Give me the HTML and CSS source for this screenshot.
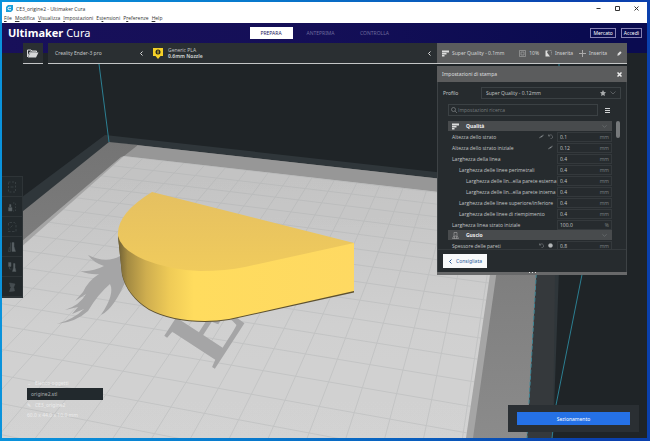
FILE: index.html
```html
<!DOCTYPE html>
<html lang="it">
<head>
    <meta charset="UTF-8">
    <meta name="viewport" content="width=device-width, initial-scale=1.0">
    <title>CE3_origine2 - Ultimaker Cura</title>
    <link rel="stylesheet" href="styles.css">
</head>
<body>
    <div class="window">
        <div class="titlebar">
            <svg class="app-icon" viewBox="0 0 14 14"><path d="M4 0h10v10l-4 4H0V4z" fill="#1a9fd9"/><path d="M10 4.500H6.500a2.500 2.500 0 0 0 0 5H10" fill="none" stroke="#fff" stroke-width="2"/></svg>
            <span class="title">CE3_origine2 - Ultimaker Cura</span>
            <div class="window-buttons">
                <button aria-label="Riduci"><svg viewBox="0 0 10 10"><path d="M1 5h8"/></svg></button>
                <button aria-label="Ingrandisci"><svg viewBox="0 0 10 10"><path d="M1 1h8v8H1z"/></svg></button>
                <button aria-label="Chiudi"><svg viewBox="0 0 10 10"><path d="M1 1l8 8M9 1L1 9"/></svg></button>
            </div>
        </div>
        <nav class="menubar">
            <a href="#"><u>F</u>ile</a>
            <a href="#"><u>M</u>odifica</a>
            <a href="#"><u>V</u>isualizza</a>
            <a href="#"><u>I</u>mpostazioni</a>
            <a href="#">Es<u>t</u>ensioni</a>
            <a href="#">P<u>r</u>eferenze</a>
            <a href="#"><u>H</u>elp</a>
        </nav>

        <main class="main">
            <svg class="scene" viewBox="2 23 645 415" preserveAspectRatio="xMinYMin slice" aria-hidden="true">
                <defs>
                    <linearGradient id="bed" x1="0" y1="0" x2="0" y2="1">
                        <stop offset="0" stop-color="#c2c2c2"/>
                        <stop offset="0.600" stop-color="#d0d0d0"/>
                        <stop offset="1" stop-color="#d3d3d3"/>
                    </linearGradient>
                    <linearGradient id="frame" x1="0" y1="0" x2="0" y2="1">
                        <stop offset="0" stop-color="#747474"/>
                        <stop offset="1" stop-color="#8b8b8b"/>
                    </linearGradient>
                    <linearGradient id="top" x1="0" y1="0" x2="0" y2="1">
                        <stop offset="0" stop-color="#e5c061"/>
                        <stop offset="1" stop-color="#f0cb5c"/>
                    </linearGradient>
                    <linearGradient id="side" gradientUnits="userSpaceOnUse" x1="118" y1="0" x2="354" y2="0">
                        <stop offset="0" stop-color="#6f6035"/>
                        <stop offset="0.040" stop-color="#a38a42"/>
                        <stop offset="0.120" stop-color="#cfae4f"/>
                        <stop offset="0.220" stop-color="#efcb57"/>
                        <stop offset="0.320" stop-color="#ffdc5e"/>
                        <stop offset="1" stop-color="#fed962"/>
                    </linearGradient>
                    <clipPath id="bed-clip"><path d="M124 156L501 199L466 438H2V264z"/></clipPath>
                </defs>
                <path d="M2 23h645v415H2z" fill="#1f2427"/>
                <!-- bordo esterno del piatto -->
                <path d="M2 212L105 135L562 186L553 438H2z" fill="#2f363a"/>
                <path d="M555 275L562 186L530 186L527 438H553z" fill="#35393c"/>
                <path d="M2 228L109 142L541 190L527 438H2z" fill="url(#frame)"/>
                <path d="M109 142L541 190L501 199L124 156L138 145z" fill="#979797"/>
                <path d="M121 157L124 156L501 199L507 199L473 438H2V258z" fill="#a5a5a5"/>
                <path d="M124 156L501 199L466 438H2V264z" fill="url(#bed)"/>
                <g id="grid" clip-path="url(#bed-clip)" stroke="#a9acad" stroke-width="1" opacity="0.350"></g>
                <!-- drago -->
                <path d="M120 256Q106 264 88 255Q94 263 104 266Q93 272 80 271Q91 275 99 274Q88 281 83 292L75 301L86 294Q80 305 65 310L78 307L72 314L84 309Q74 319 57 324Q76 322 88 311Q98 294 110 284Q115 294 101 315Q114 309 127 278z" fill="#a5a5a6"/>
                <text class="bed-text" transform="translate(214 370) rotate(-57)">E</text>
                <!-- volume di stampa -->
                <path d="M99 64L109 142M559 64V80M620 84L556 405L552 438" fill="none" stroke="#2c7f92"/>
                <path d="M541 190L527 438" stroke="#3c8797" stroke-dasharray="4 2"/>
                <!-- modello -->
                <path d="M118 236L122 275Q127 296 149 310Q172 322 205 322Q217 322 229 320L354 292.500V243z" fill="#5d5130"/>
                <path d="M118 236L122 274Q127 295 149 309Q172 321 205 321Q217 321 229 319L354 291V243z" fill="url(#side)"/>
                <path d="M152 192L354 243L245 267Q226 271 200 271Q170 270 145 260Q121 250 118 236Q116 214 152 192z" fill="url(#top)"/>
            </svg>

            <header class="header">
                <div class="logo"><b>Ultimaker</b> Cura</div>
                <nav class="stages">
                    <button class="stage active">PREPARA</button>
                    <button class="stage">ANTEPRIMA</button>
                    <button class="stage">CONTROLLA</button>
                </nav>
                <div class="account">
                    <button>Mercato</button>
                    <button>Accedi</button>
                </div>
            </header>

            <div class="stage-bar">
                <button class="open-file" aria-label="Apri file">
                    <svg viewBox="0 0 24 18"><path d="M1 16V2h7l2 2h9v2H6z" fill="none" stroke="#d6d8d9" stroke-width="2"/><path d="M7 7h16l-5 10H2z" fill="#d6d8d9"/></svg>
                </button>
                <div class="config">
                    <button class="printer">Creality Ender-3 pro
                        <svg class="chevron" viewBox="0 0 10 10"><path d="M7 1L3 5l4 4"/></svg>
                    </button>
                    <button class="material">
                        <svg class="extruder" viewBox="0 0 20 22"><path d="M0 0h20v16h-5l-5 6-5-6H0z" fill="#f5d027"/><circle cx="10" cy="8" r="5" fill="#2b2a20"/><path d="M10 5v6" stroke="#f5d027" stroke-width="2"/></svg>
                        <span>Generic PLA<br><b>0.6mm Nozzle</b></span>
                        <svg class="chevron" viewBox="0 0 10 10"><path d="M7 1L3 5l4 4"/></svg>
                    </button>
                </div>
                <button class="summary">
                    <span class="item quality"><svg viewBox="0 0 14 14"><path d="M0 1h14v4H0zM0 6h9v3H0zM0 10h5v3H0z" fill="#ddd"/></svg>Super Quality - 0.1mm</span>
                    <span class="item"><svg viewBox="0 0 14 14"><path d="M1 1h12v12H1zM4 4h6v6H4z" fill="none" stroke="#bbb"/></svg>10%</span>
                    <span class="item"><svg viewBox="0 0 14 14"><path d="M1 1h5L4 5l6 8H1z" fill="#ddd"/><path d="M7 1h6v8" fill="none" stroke="#bbb" stroke-dasharray="2 1"/></svg>Inserita</span>
                    <span class="item"><svg viewBox="0 0 14 14"><path d="M7 0v14M0 7h14" fill="none" stroke="#aaa" stroke-width="2"/></svg>Inserita</span>
                    <svg class="pencil" viewBox="0 0 14 14"><path d="M1 13l1-5 7-7 4 4-7 7z" fill="#ddd"/></svg>
                </button>
            </div>

            <div class="content">
                <div class="toolbar">
                    <button aria-label="Sposta"><svg viewBox="0 0 20 24"><path d="M3 2h14v20H3z" stroke-dasharray="4 3"/><path d="M7 12h6"/></svg></button>
                    <button aria-label="Scala"><svg viewBox="0 0 20 24"><path d="M3 13h7v7H3zM5 7h3v5H5z" fill="#596064"/><path d="M12 4h5v16h-5" stroke-dasharray="3 3"/></svg></button>
                    <button aria-label="Ruota"><svg viewBox="0 0 20 24"><path d="M3 9V3h12l3 4v14H3v-6" stroke-dasharray="5 3"/><path d="M7 13l4-4"/></svg></button>
                    <button aria-label="Specchia"><svg viewBox="0 0 20 24"><path d="M10 3h4v8l3 10h-7z" fill="#596064"/><path d="M7 3v18H3l2-9"/></svg></button>
                    <button aria-label="Impostazioni per modello"><svg viewBox="0 0 20 24"><path d="M3 3h5v8H3zM13 5h3v8l2 8h-7l2-8z" fill="#596064"/><path d="M5 12v4h4"/></svg></button>
                    <button aria-label="Blocco supporto"><svg viewBox="0 0 20 24"><path d="M5 4l11 2-3 6 2 8-10 1 3-8z" fill="#444b4f"/><path d="M5 10h10M6 16h9"/></svg></button>
                </div>

                <section class="panel">
                    <div class="panel-title">
                        <h2>Impostazioni di stampa</h2>
                        <button aria-label="Chiudi pannello"><svg viewBox="0 0 10 10"><path d="M1 1l8 8M9 1L1 9" stroke="#eee" stroke-width="3"/></svg></button>
                    </div>
                    <div class="profile">
                        <label for="profilo">Profilo</label>
                        <div class="select">
                            <select id="profilo"><option>Super Quality - 0.12mm</option></select>
                            <svg class="star" viewBox="0 0 12 12"><path d="M6 0l2 4 4 .5-3 3 .8 4.500L6 10l-3.800 2L3 7.500l-3-3L4 4z" fill="#a9acad"/></svg>
                            <svg class="down" viewBox="0 0 12 12"><path d="M1 3l5 5 5-5"/></svg>
                        </div>
                    </div>
                    <div class="search">
                        <div class="search-box">
                            <svg viewBox="0 0 12 12"><circle cx="5" cy="5" r="4"/><path d="M8 8l4 4"/></svg>
                            <input type="text" aria-label="Cerca impostazioni" placeholder="Impostazioni ricerca">
                        </div>
                        <button aria-label="Visibilità"><svg viewBox="0 0 5 5"><path d="M0 0h5v1H0zM0 2h5v1H0zM0 4h5v1H0z" fill="#d0d2d3"/></svg></button>
                    </div>
                    <div class="settings">
                        <div class="list">
                            <button class="category">
                                <svg viewBox="0 0 14 14"><path d="M0 1h14v4H0zM0 6h9v3H0zM0 10h5v3H0z" fill="#ddd"/></svg>
                                <span>Qualità</span>
                                <svg class="down" viewBox="0 0 12 12"><path d="M1 3l5 5 5-5"/></svg>
                            </button>
                            <div class="row"><label for="s1">Altezza dello strato</label><svg viewBox="0 0 12 12"><path d="M5 7l5-5 1 1-4 4zM7 5l-5 5-1-1 4-4z"/></svg><svg viewBox="0 0 12 12"><path d="M1 1v4h4M1 5c4-5 10-3 10 2s-4 4-5 4"/></svg><span class="value"><input id="s1" value="0.1"><i>mm</i></span></div>
                            <div class="row"><label for="s2">Altezza dello strato iniziale</label><svg viewBox="0 0 12 12"><path d="M5 7l5-5 1 1-4 4zM7 5l-5 5-1-1 4-4z"/></svg><span class="value"><input id="s2" value="0.12"><i>mm</i></span></div>
                            <div class="row"><label for="s3">Larghezza della linea</label><span class="value"><input id="s3" value="0.4"><i>mm</i></span></div>
                            <div class="row level-1"><label for="s4">Larghezza delle linee perimetrali</label><span class="value"><input id="s4" value="0.4"><i>mm</i></span></div>
                            <div class="row level-2"><label for="s5">Larghezza delle lin...ella parete esterna</label><span class="value"><input id="s5" value="0.4"><i>mm</i></span></div>
                            <div class="row level-2"><label for="s6">Larghezza delle lin...ella parete interna</label><span class="value"><input id="s6" value="0.4"><i>mm</i></span></div>
                            <div class="row level-1"><label for="s7">Larghezza delle linee superiore/inferiore</label><span class="value"><input id="s7" value="0.4"><i>mm</i></span></div>
                            <div class="row level-1"><label for="s8">Larghezza delle linee di riempimento</label><span class="value"><input id="s8" value="0.4"><i>mm</i></span></div>
                            <div class="row"><label for="s9">Larghezza linea strato iniziale</label><span class="value"><input id="s9" value="100.0"><i>%</i></span></div>
                            <button class="category">
                                <svg viewBox="0 0 14 14"><path d="M4 1h6v6l3 6H1l3-6zM5 13V8h4v5" fill="none" stroke="#bbb"/></svg>
                                <span>Guscio</span>
                                <svg class="down" viewBox="0 0 12 12"><path d="M1 3l5 5 5-5"/></svg>
                            </button>
                            <div class="row"><label for="s10">Spessore delle pareti</label><svg viewBox="0 0 12 12"><path d="M1 1v4h4M1 5c4-5 10-3 10 2s-4 4-5 4"/></svg><svg viewBox="0 0 12 12"><circle cx="6" cy="6" r="5" fill="#b5b8b9"/></svg><span class="value"><input id="s10" value="0.8"><i>mm</i></span></div>
                        </div>
                        <div class="scrollbar"></div>
                    </div>
                    <div class="panel-footer">
                        <button class="recommended"><svg viewBox="0 0 10 10"><path d="M7 1L3 5l4 4"/></svg>Consigliata</button>
                    </div>
                    <div class="grip"><i></i><i></i><i></i></div>
                </section>

                <div class="objects">
                    <span>⌄ &nbsp; Elenco oggetti</span>
                    <div class="object">origine2.stl</div>
                    <span>✎ &nbsp; CE3_origine2</span>
                    <span>60.0 x 44.0 x 10.0 mm</span>
                </div>

                <div class="action">
                    <button>Sezionamento</button>
                </div>
            </div>
        </main>
    </div>
    <script src="script.js"></script>
</body>
</html>
```
FILE: styles.css
```css
*{
    margin: 0;
    padding: 0;
    box-sizing: border-box;
}
body{
    height: 100vh;
    padding: 2px 3px 3px 2px;
    background: linear-gradient(90deg, #0a93dc, #0878cc 40%, #0a40ad 90%);
    font-family: "Noto Sans", "Open Sans", sans-serif;
    font-size: 5px;
    line-height: 8px;
    color: #c3c6c7;
}
button, input, select{
    font: inherit;
    color: inherit;
    background: none;
    border: none;
    appearance: none;
    outline: none;
}
a{
    color: inherit;
    text-decoration: none;
}
svg{
    display: block;
    flex-shrink: 0;
}
.window{
    display: flex;
    flex-direction: column;
    height: 100%;
    overflow: hidden;
}

/* barra del titolo e menu */
.titlebar{
    display: flex;
    align-items: center;
    gap: 3px;
    height: 13px;
    padding: 0 8px 0 4px;
    background: #fff;
    color: #333;
    font-family: "Open Sans", sans-serif;
}
.app-icon{
    width: 7px;
    height: 7px;
}
.window-buttons{
    display: flex;
    gap: 14px;
    margin-left: auto;
}
.window-buttons svg{
    width: 5px;
    height: 5px;
    fill: none;
    stroke: #333;
    stroke-width: 2;
}
.menubar{
    display: flex;
    gap: 3px;
    height: 8px;
    padding: 0 2px;
    background: #fff;
    color: #333;
    font-family: "Open Sans", sans-serif;
    line-height: 6px;
}

.main{
    position: relative;
    flex: 1;
    display: flex;
    flex-direction: column;
    background: #1f2427;
}
.scene{
    position: absolute;
    inset: 0;
    width: 100%;
    height: 100%;
}
.bed-text{
    font: bold 92px "Liberation Serif", serif;
    fill: #a5a5a6;
}
.header, .stage-bar, .content{
    position: relative;
}
.header{
    display: grid;
    grid-template-columns: 1fr auto 1fr;
    align-items: center;
    height: 30px;
    padding: 0 5px 10px 6px;
    background: linear-gradient(90deg, #18105a, #140f57 50%, #0a0b50 90%);
}
.logo{
    font-size: 11px;
    line-height: 14px;
    color: #fff;
}
.stages{
    display: flex;
    gap: 2px;
}
.stage{
    width: 52px;
    height: 12px;
    color: #6d6a9c;
}
.stage.active{
    width: 43px;
    background: #fff;
    color: #19135c;
}
.account{
    display: flex;
    justify-content: flex-end;
    gap: 5px;
}
.account button{
    height: 10px;
    padding: 0 2px;
    border: 1px solid #8582b4;
    color: #fff;
}

/* barra di configurazione */
.stage-bar{
    display: flex;
    height: 21px;
    margin: -10px 20px 0 21px;
}
.stage-bar button{
    display: flex;
    align-items: center;
    text-align: left;
    border-bottom: 1px solid #c4c6c7;
}
.open-file{
    width: 20px;
    margin-right: 5px;
    justify-content: center;
    background: #2a2f32;
}
.open-file svg{
    width: 12px;
    height: 9px;
}
.config{
    flex: 1;
    display: flex;
    background: #2a2f32;
}
.printer{
    width: 100px;
    padding: 0 4px 0 7px;
    justify-content: space-between;
}
.material{
    flex: 1;
    padding: 0 5px;
    gap: 5px;
    font-family: "Open Sans", sans-serif;
    line-height: 6px;
}
.material .chevron{
    margin-left: auto;
}
.extruder{
    width: 10px;
    height: 11px;
}
.chevron{
    width: 5px;
    height: 5px;
    fill: none;
    stroke: #ddd;
    stroke-width: 2;
}
.stage-bar .summary{
    width: 190px;
    padding: 0 5px;
    gap: 6px;
    background: #5b5c5d;
    color: #d2d3d4;
}
.item{
    display: flex;
    align-items: center;
    gap: 3px;
}
.summary svg{
    width: 7px;
    height: 7px;
}
.summary .quality{
    margin-right: auto;
}
.summary .pencil{
    width: 5px;
    height: 5px;
    margin-left: 4px;
}

.content{
    flex: 1;
    display: grid;
    grid-template-columns: 1fr auto;
    grid-template-rows: 1fr auto;
}

/* strumenti */
.toolbar{
    align-self: start;
    width: 21px;
    margin-top: 112px;
    background: #22282b;
    border: 1px solid #2e3437;
    border-left: none;
}
.toolbar button{
    display: flex;
    align-items: center;
    justify-content: center;
    width: 100%;
    height: 20px;
    border-bottom: 1px solid #2e3437;
}
.toolbar svg{
    width: 10px;
    height: 12px;
    fill: none;
    stroke: #4d5458;
    stroke-width: 1;
}

/* pannello impostazioni */
.panel{
    align-self: start;
    width: 190px;
    margin: 2px 20px 0 0;
    background: #262b2e;
    border: 1px solid #3d4245;
    border-top: none;
    border-bottom: none;
}
.panel-title{
    display: flex;
    align-items: center;
    justify-content: space-between;
    height: 16px;
    margin: 0 -1px;
    padding: 0 5px;
    background: #5b5c5d;
}
.panel-title h2{
    font-size: 5px;
    font-weight: normal;
    color: #dddedf;
}
.panel-title svg{
    width: 5px;
    height: 5px;
}
.profile{
    display: flex;
    align-items: center;
    justify-content: space-between;
    padding: 5px 5px 0 5px;
}
.select{
    position: relative;
    width: 140px;
    height: 12px;
    border: 1px solid #3b4144;
}
.select select{
    width: 100%;
    height: 10px;
    padding-left: 4px;
    font-family: "Open Sans", sans-serif;
}
.select svg{
    position: absolute;
    top: 2px;
    width: 6px;
    height: 6px;
}
.select .star{
    right: 14px;
}
.select .down{
    right: 4px;
}
.down{
    width: 5px;
    height: 5px;
    fill: none;
    stroke: #8d9193;
    stroke-width: 1;
}
.search{
    display: flex;
    align-items: center;
    gap: 7px;
    padding: 5px 0 5px 10px;
    font-family: "Open Sans", sans-serif;
}
.search-box{
    display: flex;
    align-items: center;
    gap: 1px;
    width: 150px;
    height: 12px;
    padding-left: 2px;
    border: 1px solid #3b4144;
}
.search-box svg{
    width: 6px;
    height: 6px;
    fill: none;
    stroke: #a0a4a6;
}
.search-box input{
    flex: 1;
    min-width: 0;
}
.search-box input::placeholder{
    color: #777c7f;
    opacity: 1;
}
.search button svg{
    width: 5px;
    height: 5px;
}
.settings{
    display: flex;
    gap: 4px;
    height: 129px;
    padding-left: 10px;
    overflow: hidden;
    border-bottom: 1px solid #34393c;
}
.list{
    width: 164px;
    height: 128px;
    overflow: hidden;
}
.category{
    display: flex;
    align-items: center;
    gap: 7px;
    width: 100%;
    height: 10px;
    padding: 0 5px 0 4px;
    background: #484b4d;
    color: #f0f0f0;
    font-weight: bold;
}
.category svg{
    width: 7px;
    height: 7px;
}
.category .down{
    width: 5px;
    height: 5px;
    margin-left: auto;
}
.row{
    display: flex;
    align-items: center;
    gap: 4px;
    height: 11px;
    padding-left: 4px;
    font-family: "Open Sans", sans-serif;
}
.row label{
    flex: 1;
    min-width: 0;
    white-space: nowrap;
}
.row svg{
    width: 5px;
    height: 5px;
    fill: none;
    stroke: #a3a7a9;
    stroke-width: 1;
}
.level-1{
    padding-left: 11px;
}
.level-2{
    padding-left: 18px;
}
.value{
    display: flex;
    align-items: center;
    flex-shrink: 0;
    width: 55px;
    height: 10px;
    padding: 0 2px;
    border: 1px solid #34393c;
}
.value input{
    flex: 1;
    min-width: 0;
    height: 8px;
}
.value i{
    font-style: normal;
    color: #7d8284;
}
.scrollbar{
    width: 4px;
    height: 17px;
    border-radius: 2px;
    background: #76797b;
}
.panel-footer{
    padding: 4px 5px;
}
.recommended{
    display: flex;
    align-items: center;
    gap: 3px;
    height: 14px;
    padding: 0 5px;
    background: #f8f9fa;
    color: #2b5c9b;
}
.recommended svg{
    width: 5px;
    height: 5px;
    fill: none;
    stroke: #2b5c9b;
    stroke-width: 2;
}
.grip{
    display: flex;
    justify-content: center;
    gap: 2px;
    height: 3px;
    margin: 0 -1px;
    background: #68696a;
}
.grip i{
    width: 1px;
    height: 1px;
    background: #ddd;
}

/* elenco oggetti e pulsante di sezionamento */
.objects{
    display: flex;
    flex-direction: column;
    align-self: end;
    width: 76px;
    margin: 0 0 18px 25px;
    line-height: 10px;
    color: #ececec;
}
.object{
    height: 12px;
    padding: 1px 4px;
    background: #22292d;
    color: #a9adaf;
}
.action{
    align-self: end;
    justify-self: end;
    width: 131px;
    margin: 0 8px 6px 0;
    padding: 7px 9px;
    background: #2a2f33;
}
.action button{
    width: 100%;
    height: 13px;
    background: #2571e6;
    color: #fff;
}
```
FILE: script.js
```js
// Griglia del piatto: due fasci di linee verso i punti di fuga
var grid = document.getElementById('grid');

function linea(x1, y1, x2, y2){
    var l = document.createElementNS('http://www.w3.org/2000/svg', 'line');
    l.setAttribute('x1', x1);
    l.setAttribute('y1', y1);
    l.setAttribute('x2', x2);
    l.setAttribute('y2', y2);
    grid.appendChild(l);
}

for (let k = -14; k < 5; k++) {
    linea(564, -232, 306 + 39 * k, 441);
}
for (let k = -6; k < 13; k++) {
    var x = 672 + 160 * k;
    // prolunga la linea oltre il bordo destro
    linea(-3238, -232, x + (x + 3238), 441 + 673);
}
```
